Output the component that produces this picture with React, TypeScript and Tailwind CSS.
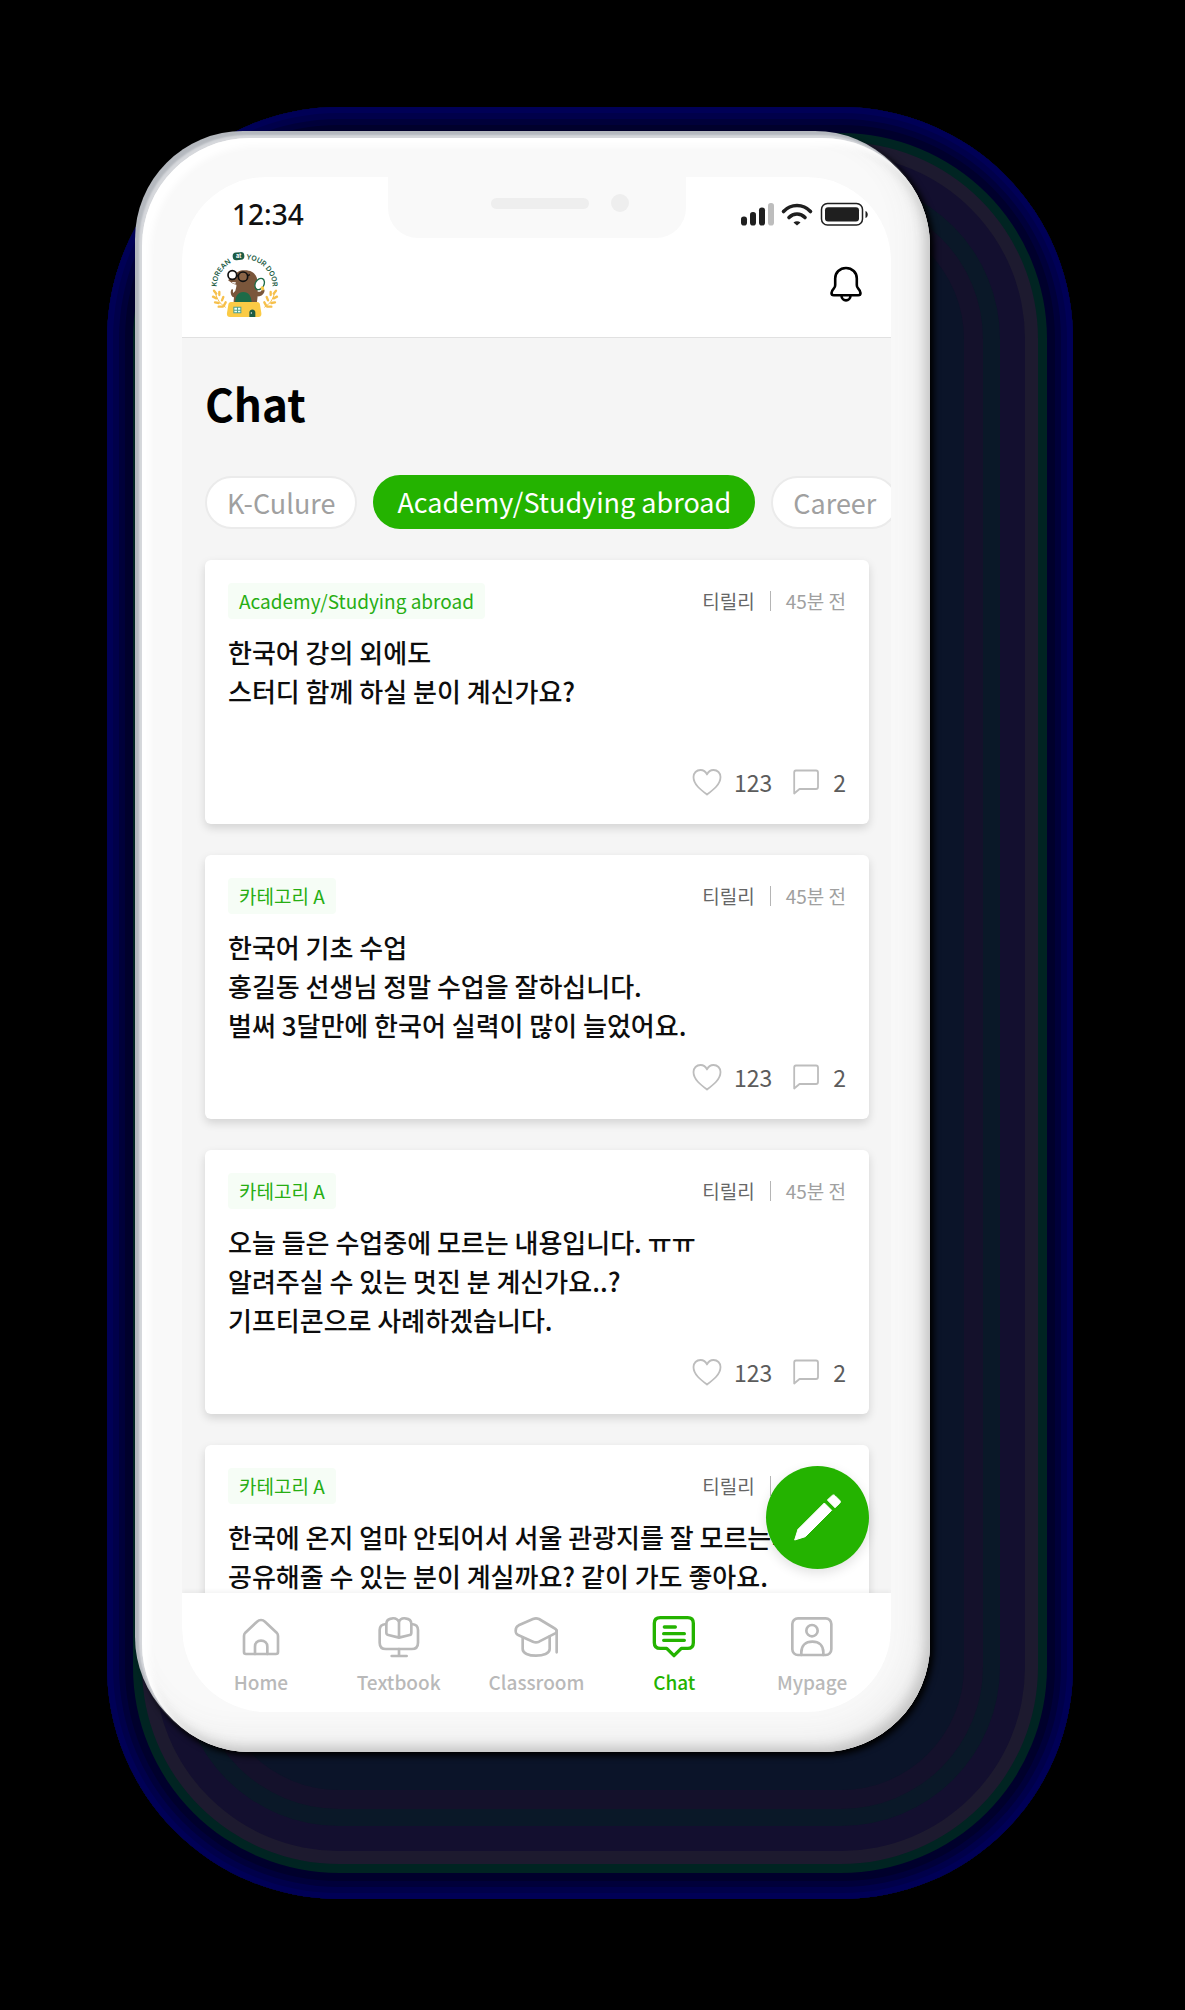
import React from "react";

type Post = { tag: string; author: string; time: string; lines: string[]; likes: number; comments: number };

const posts: Post[] = [
  { tag: "Academy/Studying abroad", author: "티릴리", time: "45분 전", lines: ["한국어 강의 외에도", "스터디 함께 하실 분이 계신가요?"], likes: 123, comments: 2 },
  { tag: "카테고리 A", author: "티릴리", time: "45분 전", lines: ["한국어 기초 수업", "홍길동 선생님 정말 수업을 잘하십니다.", "벌써 3달만에 한국어 실력이 많이 늘었어요."], likes: 123, comments: 2 },
  { tag: "카테고리 A", author: "티릴리", time: "45분 전", lines: ["오늘 들은 수업중에 모르는 내용입니다. ㅠㅠ", "알려주실 수 있는 멋진 분 계신가요..?", "기프티콘으로 사례하겠습니다."], likes: 123, comments: 2 },
  { tag: "카테고리 A", author: "티릴리", time: "45분 전", lines: ["한국에 온지 얼마 안되어서 서울 관광지를 잘 모르는데", "공유해줄 수 있는 분이 계실까요? 같이 가도 좋아요."], likes: 123, comments: 2 },
];

const categories = ["K-Culure", "Academy/Studying abroad", "Career"];

function Logo() {
  return (
    <svg viewBox="36 30 201 201" className="size-[67px] overflow-visible" role="img" aria-label="Korean at your door">
      <defs>
        <path id="ring" d="M53 139a84 84 0 0 1 168 0v6" />
      </defs>
      <g fill="#1d5c44" className="font-['Inter'] text-[21px] font-semibold">
        <text><textPath href="#ring" startOffset="2">KOREAN</textPath></text>
        <text><textPath href="#ring" startOffset="136">YOUR DOOR</textPath></text>
      </g>
      <rect x="101" y="34" width="35" height="23" rx="11" fill="#1d5c44" transform="rotate(-6 119 45)" />
      <text x="119" y="51" textAnchor="middle" fill="#fff" className="font-['Inter'] text-[17px] font-bold">at</text>
      <path d="M106 189c-4-6-1-14-1-20-7-1-12-12-9-20 1-4 4-5 6-3 1 3-2 7 1 10l6-7c2-7 4-13 3-18-8-1-14-4-20-10-4 0-5-4-2-6 6-3 10-2 16-10 5-12 18-18 32-17 24 0 38 15 38 38v26c8 2 12-2 14-9 8-1 8 8 4 14-4 7-10 10-18 9l-3 24Z" fill="#7a563b" />
      <path d="M108 189c0-24 9-36 25-36s25 12 25 36Z" fill="#1d6b48" />
      <path d="M96 183h78c6 0 8 3 9 8l4 25c1 8-2 12-9 12H93c-7 0-10-4-9-12l4-25c1-5 3-8 8-8Z" fill="#fbcb45" />
      <circle cx="100" cy="102" r="13" fill="#fff" stroke="#111" strokeWidth="5" />
      <circle cx="132" cy="107" r="14" fill="#8b6547" stroke="#111" strokeWidth="5" />
      <path d="m113 104 6 1M146 104l7-3" stroke="#111" strokeWidth="4" />
      <path d="M98 123c3 3 6 6 11 5l2-4Z" fill="#fff" />
      <ellipse cx="182" cy="129" rx="13" ry="18" fill="#fff" stroke="#1d6b48" strokeWidth="4" transform="rotate(28 182 129)" />
      <path d="M185 138c7-5 12 0 10 8-4 5-9 2-10-8Z" fill="#fbcb45" />
      <path d="M103 197h24v20h-24Z" fill="#4fa08d" />
      <path d="M106 200h8v6h-8Zm11 0h7v6h-7Zm-11 9h8v5h-8Zm11 0h7v5h-7Z" fill="#e9fff8" />
      <path d="M151 228v-13c0-13 18-13 18 0v13Z" fill="#1d5c44" />
      <circle cx="157" cy="216" r="2" fill="#fff" />
      <g fill="none" stroke="#f6c04c" strokeWidth="7" strokeLinecap="round">
        <path d="m45 149 7 9M42 167l10 5M48 184l11 2M59 197l12 0M61 153l0 9M73 168l-4 10M80 184l-5 9" />
        <path d="m231 149-7 9M234 167l-10 5M228 184l-11 2M217 197l-12 0M215 153l0 9M203 168l4 10M196 184l5 9" />
      </g>
      <path d="M49 154c4 20 15 36 31 45M227 154c-4 20-15 36-31 45" fill="none" stroke="#f6c04c" strokeWidth="3" />
    </svg>
  );
}

function StatusIcons() {
  return (
    <svg viewBox="0 0 128 24" className="h-6 w-32" aria-hidden="true">
      <g fill="#1f1f1f">
        <rect x="0" y="14.500" width="6" height="9" rx="2.800" />
        <rect x="9" y="10" width="6" height="13.500" rx="2.800" />
        <rect x="18" y="5.500" width="6" height="18" rx="2.800" />
        <rect x="27" y="1" width="6" height="22.500" rx="2.800" fill="#bdbdbd" />
        <path d="M52.500 20.500c2-1.600 5-1.600 7 0L56 23.500Z" />
        <rect x="84" y="5.200" width="34" height="14.200" rx="3" />
        <path d="M124.500 9c3 1 3 6 0 7Z" />
      </g>
      <g fill="none" stroke="#1f1f1f" strokeLinecap="round">
        <path d="M42.500 9.500c7.500-8 19.500-8 27 0" strokeWidth="3.600" />
        <path d="M48 15.500c4.500-4.600 11.500-4.600 16 0" strokeWidth="3.600" />
        <rect x="80.500" y="1.500" width="41" height="21.500" rx="6" strokeWidth="1.500" />
      </g>
    </svg>
  );
}

function Card({ post }: { post: Post }) {
  return (
    <article className="flex h-[264px] shrink-0 flex-col rounded-md bg-white px-[23px] pt-[23px] pb-[26px] shadow-[0_4px_10px_rgba(0,0,0,0.14)]">
      <div className="flex h-9 items-center justify-between">
        <span className="rounded bg-[#f6fdf6] px-[11px] text-[19px] leading-9 text-[#27ae13]">{post.tag}</span>
        <span className="flex items-center gap-[15px] text-[19px] leading-9">
          <span className="text-[#666]">{post.author}</span>
          <span className="h-5 w-px bg-[#b5b5b5]" />
          <span className="text-[#a0a0a0]">{post.time}</span>
        </span>
      </div>
      <h2 className="mt-[13px] text-[26px] leading-[39px] font-medium whitespace-nowrap text-[#0d0d0d]">
        {post.lines.map((line) => (
          <span key={line} className="block">{line}</span>
        ))}
      </h2>
      <div className="mt-auto flex h-8 items-center justify-end text-[23px] leading-8 text-[#5c5c5c]">
        <button type="button" className="flex items-center gap-3" aria-label={`${post.likes} likes`}>
          <svg viewBox="0 0 30 28" className="h-7 w-[30px]" fill="none" stroke="#bdbdbd" strokeWidth="1.800" strokeLinejoin="round">
            <path d="M15 26.500C9 22 1.500 16.500 1.500 9c0-4 3-7 7-7 3 0 5.200 1.600 6.500 4.500C16.300 3.600 18.500 2 21.500 2c4 0 7 3 7 7 0 7.500-7.500 13-13.500 17.500Z" />
          </svg>
          {post.likes}
        </button>
        <button type="button" className="ml-[21px] flex items-center gap-[14px]" aria-label={`${post.comments} comments`}>
          <svg viewBox="0 0 26 26" className="size-[26px]" fill="none" stroke="#bdbdbd" strokeWidth="1.800" strokeLinejoin="round">
            <path d="M3 1.500h20a2 2 0 0 1 2 2v14.500a2 2 0 0 1-2 2H6.500L1.200 24.500V3.500a2 2 0 0 1 1.800-2Z" />
          </svg>
          {post.comments}
        </button>
      </div>
    </article>
  );
}

const navItems: { label: string; active?: boolean; icon: React.ReactNode }[] = [
  {
    label: "Home",
    icon: (
      <>
        <path d="M15 60c0-5 1-7 4-10L54 17c7-6 17-6 24 0l35 33c3 3 4 5 4 10v48c0 4-2 6-6 6H21c-4 0-6-2-6-6Z" />
        <path d="M48 114V92c0-11 7-18 18-18s19 7 19 18v22" />
      </>
    ),
  },
  {
    label: "Textbook",
    icon: (
      <>
        <path d="M27 24C14 25 8 32 8 42v38c0 12 7 19 19 19h77c12 0 19-7 19-19V42c0-10-6-17-19-18" />
        <path d="M66 18C62 9 54 6 46 7 34 8 28 14 28 24v26c0 4 2 6 6 7l32 8 32-8c4-1 5-3 5-7V24c0-10-6-16-18-17-8-1-16 2-19 11v46" />
        <path d="M66 99v20M44 120h45" />
      </>
    ),
  },
  {
    label: "Classroom",
    icon: (
      <>
        <path d="M57 9 14 28C6 32 5 36 5 44s1 10 9 14l43 19c7 3 11 3 18 0l53-27c0-8 0-10-8-14L75 9c-7-3-11-3-18 0Z" />
        <path d="M26 66v33c0 13 18 20 40 20s41-7 41-20V62M128 44v65" />
      </>
    ),
  },
  {
    label: "Chat",
    active: true,
    icon: (
      <>
        <path d="M25 5h82c11 0 17 6 17 17v58c0 11-6 17-17 17H88L66 119 44 97H25C13 97 7 91 7 80V22C7 11 13 5 25 5Z" />
        <path d="M37 33h33M35 53h62M35 73h62" />
      </>
    ),
  },
  {
    label: "Mypage",
    icon: (
      <>
        <rect x="7" y="7" width="117" height="110" rx="17" />
        <circle cx="66" cy="44" r="17" />
        <path d="M34 117v-8c0-20 13-32 33-32s33 12 33 32v8" />
      </>
    ),
  },
];

export default function App() {
  return (
    <div className="min-h-screen bg-black pt-[107px] pr-[112px] pb-[111px] pl-[107px] font-['Noto_Sans_CJK_KR','Noto_Sans',sans-serif]">
      <div className="rounded-[232px] bg-[#0b1429] pt-[31px] pr-[143px] pb-[147px] pl-[35px] shadow-[inset_0_0_0_6px_#000056,inset_0_0_0_12px_#00004a,inset_0_0_0_18px_#00003a,inset_0_0_0_26px_#00002c,inset_0_0_0_35px_#002422,inset_0_0_0_48px_#1d1a2f,inset_0_0_0_73px_#130f2f,inset_0_0_0_90px_#0a1828,inset_0_0_0_109px_#14112b]">
        <div className="rounded-[108px] bg-[#f9f9f9] pt-[39px] pr-[39px] pb-10 pl-10 shadow-[inset_8px_8px_6px_#ffffff,inset_-5px_-5px_12px_#c4c4c4,inset_-16px_-16px_30px_#ededed,-3px_-3px_2px_#d6d8dc,-7px_-7px_0_#b4b8be,2px_2px_6px_2px_#000000]">
          <div className="relative flex aspect-[709/1535] flex-col overflow-hidden rounded-[84px] bg-[#f5f5f5]">
            <div className="absolute top-0 left-1/2 flex h-[61px] w-[298px] -translate-x-1/2 justify-end rounded-b-[30px] bg-[#f9f9f9] pr-[57px]">
              <span className="mt-[21px] h-[11px] w-[98px] rounded-full bg-[#eeeeee]" />
              <span className="mt-[17px] ml-[22px] size-[18px] rounded-full bg-[#eeeeee]" />
            </div>
            <header className="shrink-0 border-b border-[#e1e1e1] bg-white pb-5">
              <div className="flex h-[74px] items-center justify-between pr-[22px] pl-[50px]">
                <span className="font-['Noto_Sans'] text-[28px] leading-9 font-medium text-[#111]">12:34</span>
                <StatusIcons />
              </div>
              <div className="flex h-[66px] items-center justify-between pr-[29px] pl-[29px]">
                <Logo />
                <button type="button" aria-label="Notifications">
                  <svg viewBox="0 0 32 36" className="h-9 w-8" fill="none" stroke="#000" strokeWidth="2.600" strokeLinejoin="round">
                    <path d="M16 2C9.800 2 5.200 6.600 5.200 12.500V19c0 1.600-.4 2.500-1.300 3.400C2.400 24 1.500 25.500 1.500 27c0 1.500.9 2.300 2.300 2.300h24.400c1.400 0 2.300-.8 2.300-2.300 0-1.500-.9-3-2.400-4.600-.9-.9-1.300-1.800-1.300-3.400v-6.500C26.800 6.600 22.200 2 16 2Z" />
                    <path d="M11.500 29.500c0 6.500 9 6.500 9 0" />
                  </svg>
                </button>
              </div>
            </header>

            <main className="flex min-h-0 flex-1 flex-col overflow-hidden">
              <h1 className="mt-[39px] ml-[23px] text-[44px] leading-[52px] font-bold text-black">Chat</h1>
              <div className="mt-[46px] flex shrink-0 items-center gap-4 overflow-hidden pl-[23px]">
                {categories.map((c, i) => (
                  <button
                    key={c}
                    type="button"
                    className={
                      i === 1
                        ? "h-[54px] shrink-0 rounded-full bg-[#24b300] px-6 text-[27px] leading-[54px] whitespace-nowrap text-white"
                        : "h-[53px] shrink-0 rounded-full border-2 border-[#ebebeb] bg-white px-5 text-[27px] leading-[50px] whitespace-nowrap text-[#a0a0a0]"
                    }
                  >
                    {c}
                  </button>
                ))}
              </div>
              <div className="flex min-h-0 flex-1 flex-col gap-[31px] overflow-hidden pt-[31px] pr-[22px] pl-[23px]">
                {posts.map((p, i) => (
                  <Card key={i} post={p} />
                ))}
              </div>
            </main>

            <button
              type="button"
              aria-label="Write a post"
              className="absolute right-[22px] bottom-[143px] flex size-[103px] items-center justify-center rounded-full bg-[#24b300] shadow-[0_4px_12px_rgba(0,0,0,0.12)]"
            >
              <svg viewBox="0 0 141 141" className="size-[47px]" fill="#fff" stroke="#fff" strokeWidth="3" strokeLinejoin="round">
                <path d="M2 138 12 106 91 27l22 22-79 79Z" />
                <path d="m100 18 14-13c3-3 6-3 9 0l14 14c3 3 3 6 0 9l-14 13Z" />
              </svg>
            </button>

            <nav className="relative h-[119px] shrink-0 bg-white px-2.5 pt-[23px] shadow-[0_-2px_4px_rgba(0,0,0,0.05)]">
              <ul className="grid grid-cols-5">
                {navItems.map((n) => (
                  <li key={n.label}>
                    <a
                      href="#"
                      aria-current={n.active ? "page" : undefined}
                      className={n.active ? "flex flex-col items-center gap-2.5 text-[#24b300]" : "flex flex-col items-center gap-2.5 text-[#b9b9b9]"}
                    >
                      <svg
                        viewBox="0 0 132 126"
                        className="h-[42px] w-11"
                        fill="none"
                        stroke="currentColor"
                        strokeWidth={n.active ? 10 : 8}
                        strokeLinecap="round"
                        strokeLinejoin="round"
                        aria-hidden="true"
                      >
                        {n.icon}
                      </svg>
                      <span className="text-[19px] leading-7 font-medium">{n.label}</span>
                    </a>
                  </li>
                ))}
              </ul>
            </nav>
          </div>
        </div>
      </div>
    </div>
  );
}
